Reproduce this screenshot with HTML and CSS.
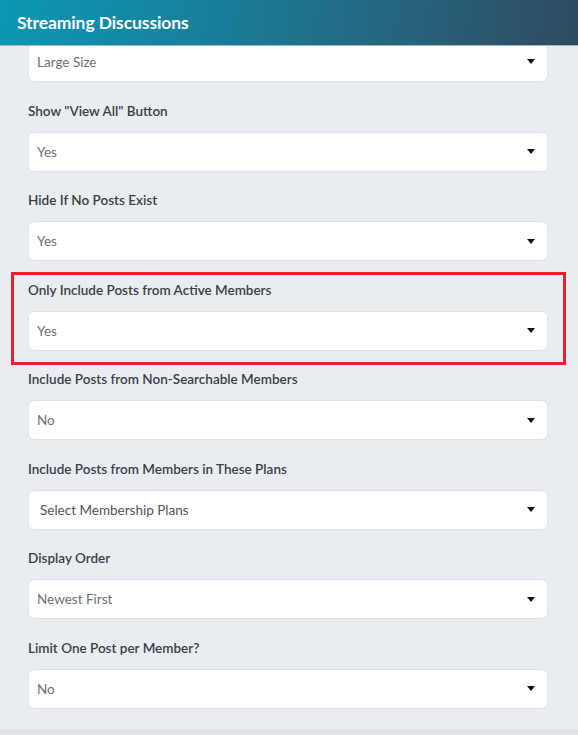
FILE: index.html
```html
<!DOCTYPE html>
<html>
<head>
<meta charset="utf-8">
<link rel="stylesheet" href="styles.css">
</head>
<body>
<div class="panel">
  <header class="panel-header">
    <h1 class="panel-title">Streaming Discussions</h1>
  </header>
  <main class="panel-body">
    <div class="select select-cut"><span class="value">Large Size</span><span class="caret"></span></div>

    <div class="field">
      <label class="label">Show "View All" Button</label>
      <div class="select"><span class="value">Yes</span><span class="caret"></span></div>
    </div>

    <div class="field">
      <label class="label">Hide If No Posts Exist</label>
      <div class="select"><span class="value">Yes</span><span class="caret"></span></div>
    </div>

    <div class="field field-highlight">
      <label class="label">Only Include Posts from Active Members</label>
      <div class="select"><span class="value">Yes</span><span class="caret"></span></div>
    </div>

    <div class="field">
      <label class="label">Include Posts from Non-Searchable Members</label>
      <div class="select"><span class="value">No</span><span class="caret"></span></div>
    </div>

    <div class="field">
      <label class="label">Include Posts from Members in These Plans</label>
      <div class="select select-multi"><span class="value">Select Membership Plans</span><span class="caret"></span></div>
    </div>

    <div class="field">
      <label class="label">Display Order</label>
      <div class="select"><span class="value">Newest First</span><span class="caret"></span></div>
    </div>

    <div class="field">
      <label class="label">Limit One Post per Member?</label>
      <div class="select"><span class="value">No</span><span class="caret"></span></div>
    </div>
  </main>
  <div class="panel-footer"></div>
</div>
</body>
</html>
```
FILE: styles.css
```css
* { box-sizing: border-box; }
html, body { margin: 0; padding: 0; }
body {
  background: #e9ecf1;
  font-family: "Lato", "Open Sans", sans-serif;
  width: 578px;
  height: 735px;
  overflow: hidden;
}
.panel {
  display: flex;
  flex-direction: column;
  height: 735px;
}
.panel-header {
  height: 46px;
  flex: none;
  display: flex;
  align-items: center;
  padding-left: 17px;
  background: linear-gradient(100deg, #0c97b4 0%, #17809c 35%, #26637d 70%, #2f4a5f 100%);
  border-bottom: 1px solid #9fb7c2;
}
.panel-title {
  margin: 0;
  color: #ffffff;
  font-size: 17.5px;
  font-weight: 700;
  letter-spacing: -0.1px;
}
.panel-body {
  flex: 1;
  padding: 0 30px 0 28px;
  display: flex;
  flex-direction: column;
}
.field {
  display: flex;
  flex-direction: column;
  margin-top: 18.5px;
}
.label {
  height: 20px;
  line-height: 20px;
  font-size: 13.5px;
  font-weight: 600;
  color: #3a3f46;
  margin-bottom: 11px;
}
.select {
  height: 40px;
  background: #ffffff;
  border: 1px solid #dfe2e6;
  border-radius: 6px;
  display: flex;
  align-items: center;
  justify-content: space-between;
  padding: 0 12px 0 8px;
}
.select-cut {
  height: 36px;
  border-top: none;
  border-radius: 0 0 6px 6px;
  padding-bottom: 4px;
}
.value {
  font-size: 13.5px;
  color: #6a7178;
}
.select-multi { padding-left: 11px; }
.select-multi .value { color: #4f545a; }
.caret {
  width: 0;
  height: 0;
  border-left: 4px solid transparent;
  border-right: 4px solid transparent;
  border-top: 5px solid #111111;
}
.field-highlight { position: relative; }
.field-highlight::after {
  content: "";
  position: absolute;
  top: -8px;
  left: -17px;
  right: -18px;
  bottom: -14px;
  border: 3px solid #e8202a;
  pointer-events: none;
}
.panel-footer {
  height: 6px;
  flex: none;
  background: #e0e3e7;
}
```
